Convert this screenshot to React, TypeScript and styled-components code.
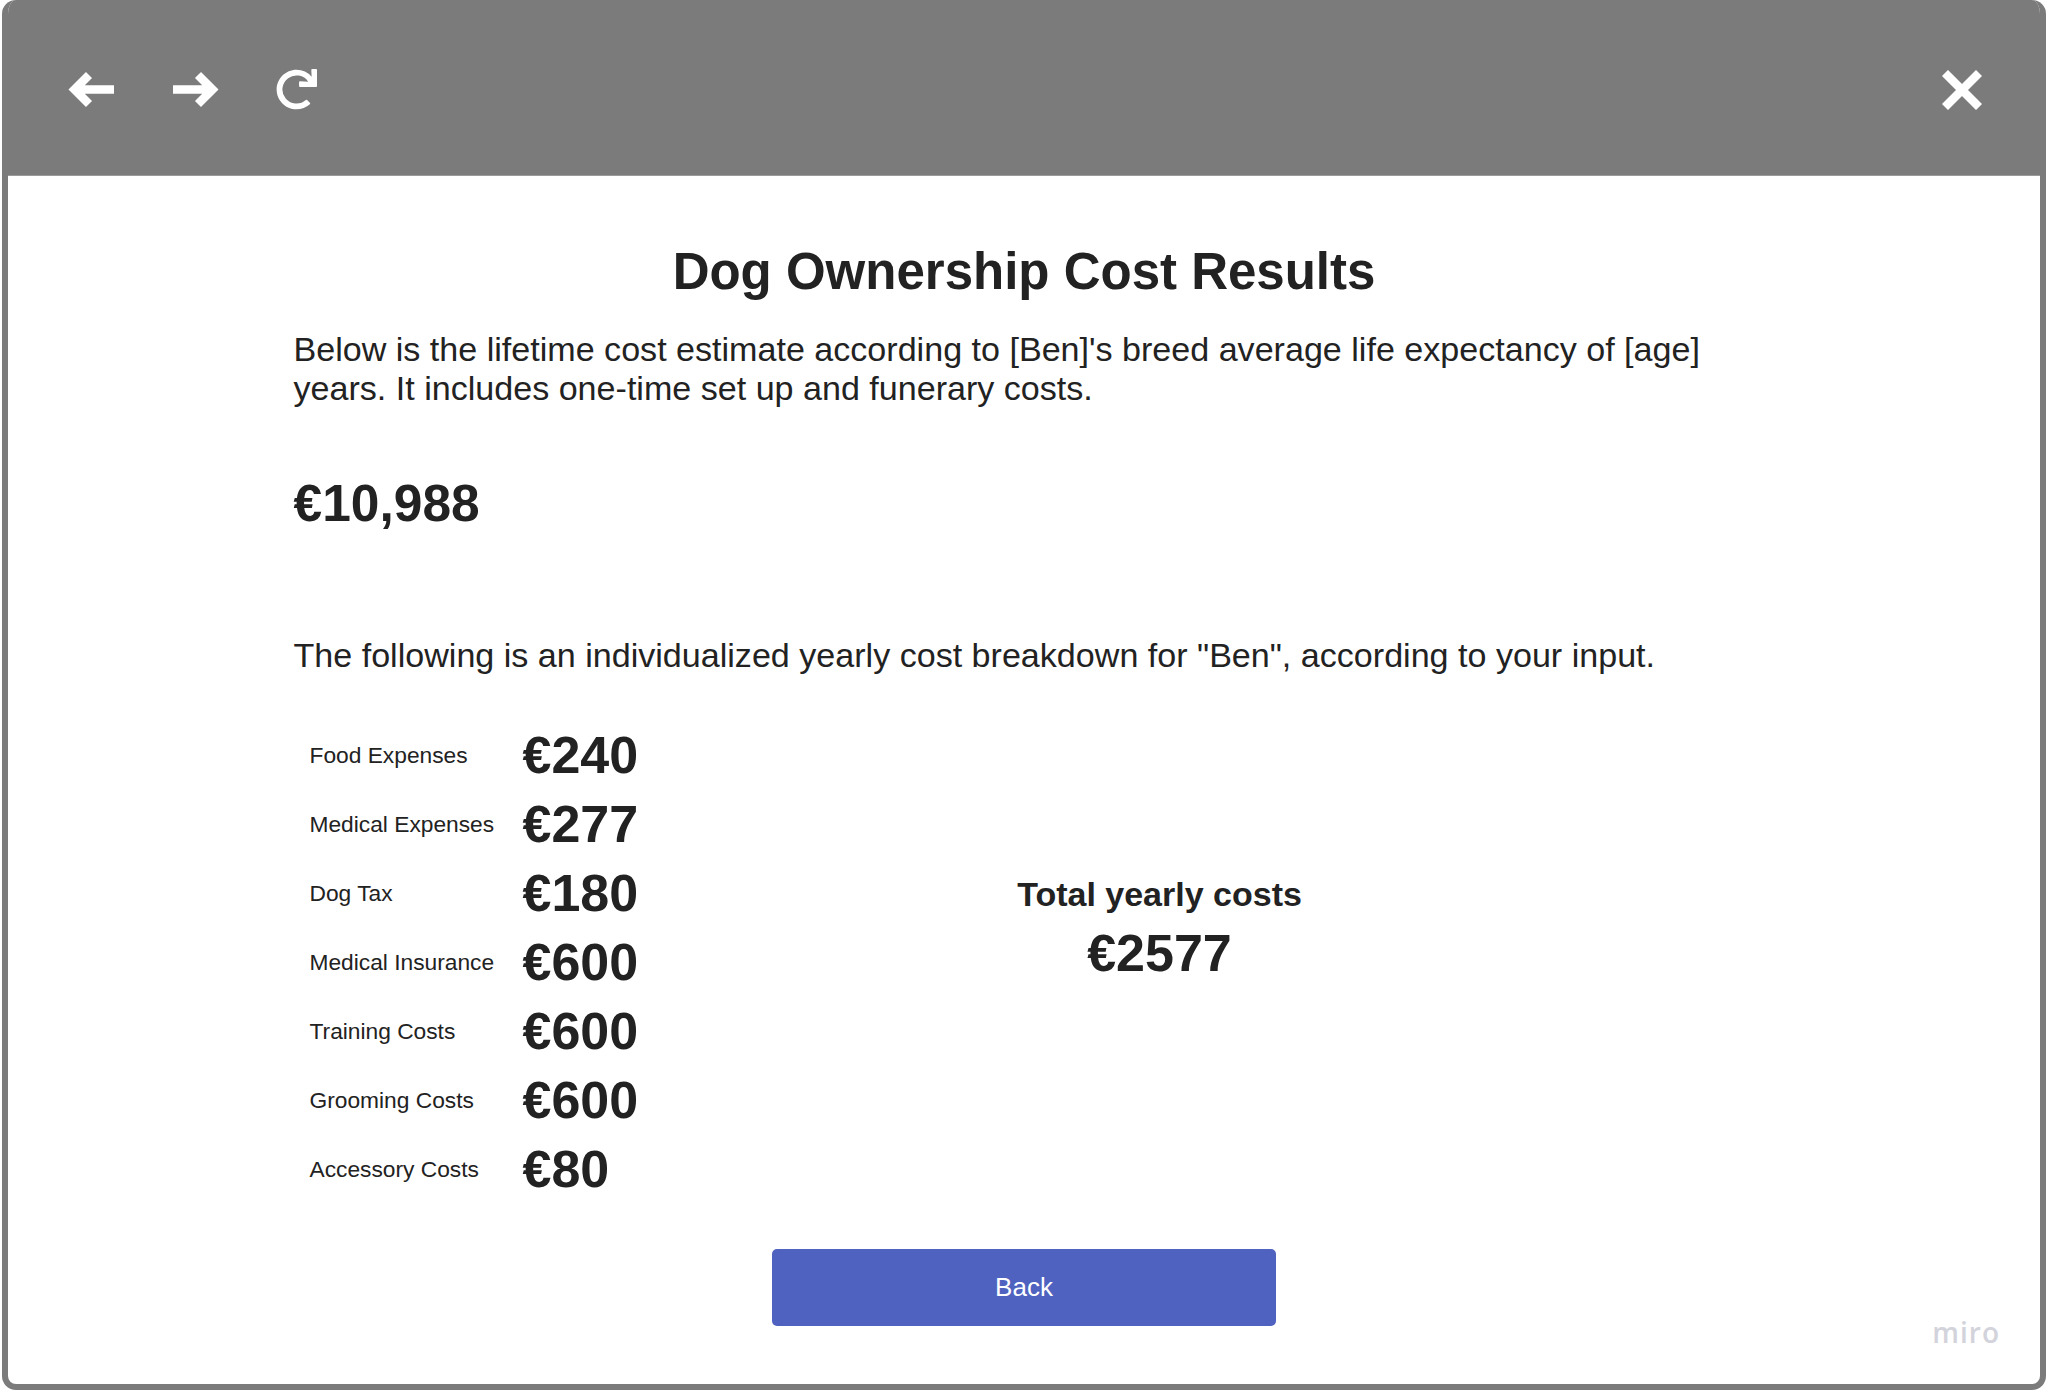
import React from "react";
import styled, { createGlobalStyle } from "styled-components";
import { FaRedo } from "react-icons/fa";

const GlobalStyle = createGlobalStyle`
  html, body {
    margin: 0;
    padding: 0;
    background: #ffffff;
  }
  body {
    font-family: "Liberation Sans", Arial, Helvetica, sans-serif;
    color: #222222;
  }
  * { box-sizing: border-box; }
`;

const Window = styled.div`
  position: relative;
  margin: 0 2px;
  height: 1390px;
  border: 6px solid #7b7b7b;
  border-top-width: 0;
  border-radius: 14px;
  overflow: hidden;
  background: #ffffff;
  display: flex;
  flex-direction: column;
`;

const Toolbar = styled.div`
  height: 176px;
  flex: none;
  background: #7b7b7b;
  display: flex;
  align-items: center;
  gap: 57px;
  padding: 4px 58px 0 60px;
  border-bottom: 1px solid #9a9a9a;
`;

const ToolButton = styled.button<{ $push?: boolean }>`
  background: none;
  border: none;
  padding: 0;
  margin-left: ${(p) => (p.$push ? "auto" : "0")};
  display: flex;
  align-items: center;
  justify-content: center;
  color: #ffffff;
  cursor: pointer;
`;

const Main = styled.main`
  flex: 1;
  width: 1461px;
  margin: 0 auto;
  padding-top: 66px;
  display: flex;
  flex-direction: column;
`;

const Title = styled.h1`
  margin: 0;
  font-size: 51px;
  line-height: 60px;
  font-weight: 700;
  text-align: center;
  color: #222222;
`;

const BodyText = styled.p<{ $gap: number }>`
  margin: ${(p) => p.$gap}px 0 0;
  font-size: 34.1px;
  line-height: 39px;
  font-weight: 400;
  color: #222222;
`;

const LifetimeTotal = styled.div`
  margin-top: 65px;
  font-size: 51.5px;
  line-height: 60px;
  font-weight: 700;
  color: #222222;
`;

const Breakdown = styled.section`
  margin-top: 45px;
  display: grid;
  grid-template-columns: 560px 612px;
`;

const CostList = styled.div`
  padding-left: 16px;
  display: flex;
  flex-direction: column;
`;

const CostRow = styled.div`
  height: 69px;
  display: grid;
  grid-template-columns: 213px auto;
  align-items: center;
`;

const CostLabel = styled.span`
  font-size: 22.75px;
  line-height: 26px;
  color: #222222;
`;

const CostValue = styled.span`
  font-size: 52px;
  line-height: 60px;
  font-weight: 700;
  color: #222222;
`;

const TotalBlock = styled.div`
  padding-top: 155px;
  display: flex;
  flex-direction: column;
  align-items: center;
  gap: 9px;
`;

const TotalLabel = styled.div`
  font-size: 34px;
  line-height: 39px;
  font-weight: 700;
  color: #222222;
`;

const TotalValue = styled.div`
  font-size: 52px;
  line-height: 60px;
  font-weight: 700;
  color: #222222;
`;

const BackButton = styled.button`
  display: block;
  width: 504px;
  height: 77px;
  margin: 46px auto 0;
  background: #5062bf;
  border: none;
  border-radius: 5px;
  color: #ffffff;
  font-family: "Liberation Sans", Arial, Helvetica, sans-serif;
  font-size: 26px;
  cursor: pointer;
`;

const Watermark = styled.div`
  position: absolute;
  right: 40px;
  bottom: 38px;
  font-family: "Open Sans", "Noto Sans", sans-serif;
  font-weight: 600;
  font-size: 28px;
  line-height: 28px;
  letter-spacing: 1px;
  color: #d3d3dc;
`;

const ArrowIcon = ({ dir }: { dir: "left" | "right" }) => (
  <svg
    width="47"
    height="39"
    viewBox="0 0 47 39"
    style={{ transform: dir === "right" ? "scaleX(-1)" : undefined }}
  >
    <path
      d="M46 19.5 H7 M21 5 L6.5 19.5 L21 34"
      fill="none"
      stroke="#ffffff"
      strokeWidth="8.5"
      strokeLinecap="butt"
      strokeLinejoin="miter"
    />
  </svg>
);

const CloseIcon = () => (
  <svg width="40" height="40" viewBox="0 0 40 40">
    <path
      d="M6 6 L34 34 M34 6 L6 34"
      fill="none"
      stroke="#ffffff"
      strokeWidth="8.5"
      strokeLinecap="square"
    />
  </svg>
);

const costs = [
  { label: "Food Expenses", value: "€240" },
  { label: "Medical Expenses", value: "€277" },
  { label: "Dog Tax", value: "€180" },
  { label: "Medical Insurance", value: "€600" },
  { label: "Training Costs", value: "€600" },
  { label: "Grooming Costs", value: "€600" },
  { label: "Accessory Costs", value: "€80" },
];

export default function App() {
  return (
    <>
      <GlobalStyle />
      <Window>
        <Toolbar>
          <ToolButton aria-label="Back">
            <ArrowIcon dir="left" />
          </ToolButton>
          <ToolButton aria-label="Forward">
            <ArrowIcon dir="right" />
          </ToolButton>
          <ToolButton aria-label="Reload">
            <FaRedo size={41} />
          </ToolButton>
          <ToolButton aria-label="Close" $push>
            <CloseIcon />
          </ToolButton>
        </Toolbar>
        <Main>
          <Title>Dog Ownership Cost Results</Title>
          <BodyText $gap={28}>
            Below is the lifetime cost estimate according to [Ben]'s breed average life
            expectancy of [age] years. It includes one-time set up and funerary costs.
          </BodyText>
          <LifetimeTotal>€10,988</LifetimeTotal>
          <BodyText $gap={103}>
            The following is an individualized yearly cost breakdown for "Ben", according to
            your input.
          </BodyText>
          <Breakdown>
            <CostList>
              {costs.map((c) => (
                <CostRow key={c.label}>
                  <CostLabel>{c.label}</CostLabel>
                  <CostValue>{c.value}</CostValue>
                </CostRow>
              ))}
            </CostList>
            <TotalBlock>
              <TotalLabel>Total yearly costs</TotalLabel>
              <TotalValue>€2577</TotalValue>
            </TotalBlock>
          </Breakdown>
          <BackButton>Back</BackButton>
        </Main>
        <Watermark>miro</Watermark>
      </Window>
    </>
  );
}
